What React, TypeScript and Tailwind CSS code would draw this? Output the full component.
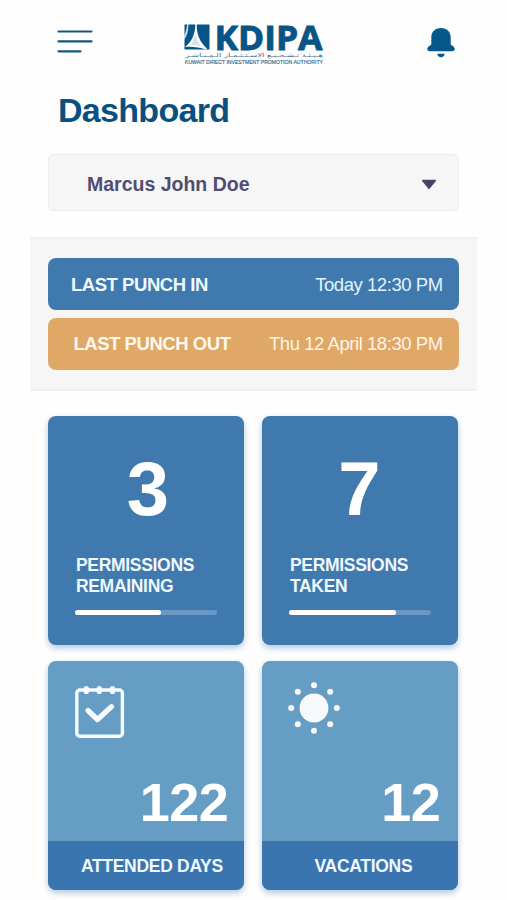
import type { ReactNode } from "react";

function Logo() {
  return (
    <svg width="142" height="46" viewBox="0 0 142 46" className="mt-[22px] overflow-visible">
      <rect x="1.500" y="2.500" width="25" height="25" fill="#075587" />
      <path d="M5.500 2C5.500 9 4 14 1 18V14C2.800 11 3.600 7 4.200 2Z" fill="#c9dde9" />
      <path d="M13.800 2C13.500 12 16.500 20 24 26.500L22.500 27.500C17 25.500 10 24.500 2 25C8.500 20 12.500 12 12.300 2Z" fill="#fff" />
      <path d="M12.300 9C12.800 16 14.800 21 18.500 24C14 23 10.500 23.100 7.500 23.300C10.500 19.500 12 14.500 12.300 9Z" fill="#d3e3ee" />
      <text x="31.500" y="27.500" textLength="108" lengthAdjust="spacingAndGlyphs" fill="#075587" className="font-['Open_Sans',sans-serif] text-[34px] font-bold" stroke="#075587" strokeWidth="0.900">KDIPA</text>
      <text x="71" y="35" textLength="138" lengthAdjust="spacingAndGlyphs" textAnchor="middle" direction="rtl" fill="#3f6f94" className="font-['DejaVu_Sans',sans-serif] text-[5.500px]">هـيـئـة تـشـجـيـع الاسـتـثـمـار الـمـبـاشـر</text>
      <text x="2" y="42" textLength="138" lengthAdjust="spacingAndGlyphs" fill="#2f688f" className="font-['Liberation_Sans',sans-serif] text-[5.500px]" stroke="#2f688f" strokeWidth="0.150">KUWAIT DIRECT INVESTMENT PROMOTION AUTHORITY</text>
    </svg>
  );
}

function MenuIcon() {
  return (
    <svg width="36" height="24" viewBox="0 0 36 24" className="mt-[29px]" stroke="#155580" strokeWidth="2.200" strokeLinecap="round">
      <path d="M1.500 2.500H34.500M1.500 12.400H34.500M1.500 22.300H23.500" />
    </svg>
  );
}

function BellIcon() {
  return (
    <svg width="28" height="30" viewBox="0 0 28 30" className="mt-[28px] ml-auto" fill="#06588c">
      <path d="M14 0C8 0 4.300 4 4.300 9.500V16.500L1.300 18.700C-.8 20.800.3 23.300 2.800 23.300H25.200C27.700 23.300 28.800 20.800 26.700 18.700L23.700 16.500V9.500C23.700 4 20 0 14 0Z" />
      <path d="M10.300 25.800H17.700C17.400 28 16 29.200 14 29.200S10.600 28 10.300 25.800Z" />
    </svg>
  );
}

function CalendarIcon() {
  return (
    <svg width="50" height="54" viewBox="0 0 50 54" fill="none" stroke="#f8fcff" strokeLinecap="round" strokeLinejoin="round">
      <rect x="1.800" y="5" width="45.600" height="46.300" rx="3" strokeWidth="3.400" />
      <path d="M11.300 3.500V6.500M24.300 3.500V6.500M37.500 3.500V6.500" strokeWidth="5.200" />
      <path d="M13 25.500L22.500 34.500L36.500 21.700" strokeWidth="5.200" />
    </svg>
  );
}

const rays = [[26, 3.200], [42.200, 9.800], [48.800, 26], [42.200, 42.200], [26, 48.800], [9.800, 42.200], [3.200, 26], [9.800, 9.800]];

function SunIcon() {
  return (
    <svg width="52" height="52" viewBox="0 0 52 52" fill="#f8f9fa">
      <circle cx="26" cy="26" r="14.400" />
      {rays.map(([x, y]) => (
        <circle key={`${x}-${y}`} cx={x} cy={y} r="3" />
      ))}
    </svg>
  );
}

function PermissionCard({ value, label, percent, shift }: { value: string; label: string; percent: number; shift: string }) {
  return (
    <div className="h-[229px] rounded-lg bg-[#3f79ad] px-[27px] shadow-[0_3px_6px_rgba(63,121,173,0.4)]">
      <div className={`pt-[35px] text-center text-[76px] leading-[76px] font-bold ${shift}`}>{value}</div>
      <div className="mt-[28px] w-[130px] pl-[0.500px] text-[17.500px] leading-[21px] font-bold tracking-[-0.300px] text-[#eef8ff]">{label}</div>
      <div className="mt-[13px] h-[5px] rounded-full bg-[#6998c4]">
        <div className="h-full rounded-full bg-white" style={{ width: `${percent}%` }} />
      </div>
    </div>
  );
}

function SummaryCard({ icon, value, label, inset, labelInset }: { icon: ReactNode; value: string; label: string; inset: string; labelInset: string }) {
  return (
    <div className="flex h-[229px] flex-col overflow-hidden rounded-lg bg-[#659dc4] shadow-[0_3px_6px_rgba(63,121,173,0.4)]">
      <div className="h-[79px] shrink-0 pt-[23px]">{icon}</div>
      <div className={`h-[101px] shrink-0 pt-[32px] text-right text-[54px] leading-[60px] font-bold tracking-[-0.500px] ${inset}`}>{value}</div>
      <div className={`h-[49px] bg-[#3a75b0] text-center text-[17.500px] leading-[50px] font-bold tracking-[-0.300px] text-[#eef8ff] ${labelInset}`}>{label}</div>
    </div>
  );
}

export default function App() {
  return (
    <div className="h-[900px] w-[507px] overflow-hidden bg-[#fefefe] font-['Liberation_Sans',Arial,sans-serif] text-white">
      <header className="flex h-[86px] items-start pr-[52px] pl-[57px]">
        <MenuIcon />
        <div className="pl-[90px]"><Logo /></div>
        <BellIcon />
      </header>
      <h1 className="h-[68px] pl-[58px] text-[34px] leading-[49px] font-bold tracking-[-0.700px] text-[#075080]">Dashboard</h1>
      <div className="mx-[48px] flex h-[57px] items-center justify-between rounded-[5px] border border-[#ededee] bg-[#f6f6f7] pr-[21px] pl-[38px]">
        <span className="pt-[4px] text-[19.500px] font-bold text-[#514d70]">Marcus John Doe</span>
        <svg width="16" height="11" viewBox="0 0 16 11" fill="#474268" stroke="#474268" strokeWidth="1.500" strokeLinejoin="round" className="mt-[3px]">
          <path d="M1.700 1.500H14.300L8 9.300Z" />
        </svg>
      </div>
      <section className="mt-[26px] mr-[30px] ml-[30px] flex h-[154px] flex-col gap-2 border-y-2 border-[#f0f0f0] bg-[#f6f6f6] px-[18.400px] pt-[19px]">
        <div className="flex h-[52px] items-center justify-between rounded-lg bg-[#3f79ad] pr-[16px] pl-[22.500px]">
          <span className="pt-px text-[18.500px] font-bold tracking-[-0.450px] text-[#eef8ff]">LAST PUNCH IN</span>
          <span className="pt-px text-[18.500px] tracking-[-0.450px] text-[#e3f3ff]">Today 12:30 PM</span>
        </div>
        <div className="flex h-[52px] items-center justify-between rounded-lg bg-[#e0a866] pr-[16px] pl-[25px]">
          <span className="text-[18.500px] font-bold tracking-[-0.450px] text-[#fff8ef]">LAST PUNCH OUT</span>
          <span className="text-[18.500px] tracking-[-0.450px] text-[#fff4e6]">Thu 12 April 18:30 PM</span>
        </div>
      </section>
      <main className="mx-[48.400px] mt-[25px] grid grid-cols-[196px_196px] gap-x-[18px] gap-y-[16px]">
        <PermissionCard value="3" label="PERMISSIONS REMAINING" percent={60} shift="pl-[3px]" />
        <PermissionCard value="7" label="PERMISSIONS TAKEN" percent={75} shift="pr-[2px]" />
        <SummaryCard icon={<div className="pt-px pl-[26.500px]"><CalendarIcon /></div>} value="122" label="ATTENDED DAYS" inset="pr-[16px]" labelInset="pl-[11px]" />
        <SummaryCard icon={<div className="-mt-[2px] pl-[26px]"><SunIcon /></div>} value="12" label="VACATIONS" inset="pr-[18px]" labelInset="pl-[6px]" />
      </main>
    </div>
  );
}
